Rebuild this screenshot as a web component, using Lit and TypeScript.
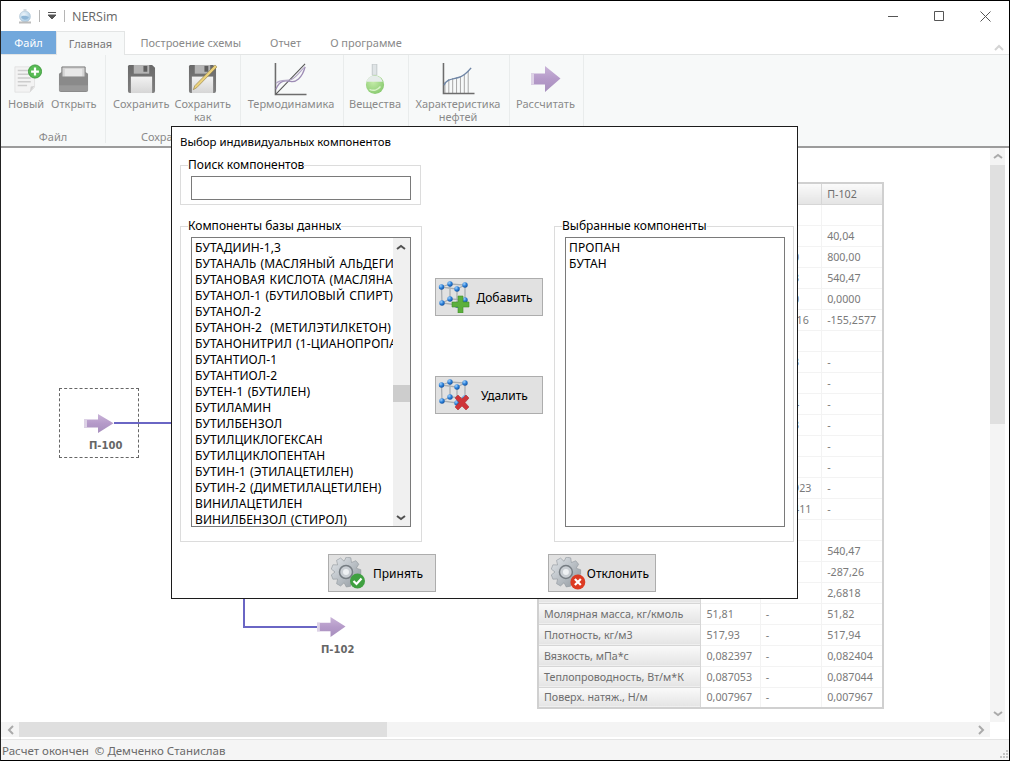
import { LitElement, html, css, svg } from 'lit';
import { customElement } from 'lit/decorators.js';

const gearPath = (cx: number, cy: number, outer: number, inner: number, teeth: number) => {
  const pts: string[] = [];
  const step = (Math.PI * 2) / teeth;
  for (let i = 0; i < teeth; i++) {
    const a = i * step;
    const corners: [number, number][] = [
      [inner, a - step * 0.5],
      [outer, a - step * 0.22],
      [outer, a + step * 0.22],
      [inner, a + step * 0.5],
    ];
    for (const [r, t] of corners) {
      pts.push(`${(cx + r * Math.cos(t)).toFixed(1)},${(cy + r * Math.sin(t)).toFixed(1)}`);
    }
  }
  return pts.join(' ');
};

const defs = html`<svg class="defs" width="0" height="0" aria-hidden="true">
  <defs>
    <linearGradient id="arrow" x1="0" y1="0" x2="0" y2="1">
      <stop offset="0" stop-color="#c9b3d8" />
      <stop offset="0.5" stop-color="#b59ac9" />
      <stop offset="1" stop-color="#a78fbd" />
    </linearGradient>
    <linearGradient id="floppy" x1="0" y1="0" x2="0" y2="1">
      <stop offset="0" stop-color="#6a6a6a" />
      <stop offset="1" stop-color="#7f7f7f" />
    </linearGradient>
    <linearGradient id="label" x1="0" y1="0" x2="0" y2="1">
      <stop offset="0" stop-color="#f2f2f2" />
      <stop offset="1" stop-color="#d6d6d6" />
    </linearGradient>
    <linearGradient id="steel" x1="0" y1="0" x2="1" y2="1">
      <stop offset="0" stop-color="#e4e8ec" />
      <stop offset="1" stop-color="#8f979e" />
    </linearGradient>
    <radialGradient id="ball" cx="0.35" cy="0.3" r="0.8">
      <stop offset="0" stop-color="#9fd2ff" />
      <stop offset="0.5" stop-color="#2a7fd8" />
      <stop offset="1" stop-color="#0f4a96" />
    </radialGradient>
    <radialGradient id="liquid" cx="0.4" cy="0.35" r="0.8">
      <stop offset="0" stop-color="#c4eba8" />
      <stop offset="1" stop-color="#7fc567" />
    </radialGradient>
    <radialGradient id="globe" cx="0.4" cy="0.35" r="0.75">
      <stop offset="0" stop-color="#eef5fa" />
      <stop offset="1" stop-color="#9fc3df" />
    </radialGradient>
  </defs>
</svg>`;

const logoIcon = html`<svg width="16" height="15" viewBox="0 0 16 15">
  <path d="M6.500 0h3v3h-3z" fill="#d5dbe0" />
  <circle cx="8" cy="7.500" r="5.500" fill="url(#globe)" stroke="#b6c6d3" stroke-width="0.600" />
  <path d="M4 8c2-2 5-1 8 0-1 3-6 4-8 0z" fill="#8fb6d6" />
  <rect x="2" y="12.500" width="12" height="2" fill="#bcbcbc" />
</svg>`;

const newIcon = html`<svg class="shift" width="28" height="30" viewBox="0 0 30 32" preserveAspectRatio="none">
  <path d="M1 3h21v22l-5 5H1z" fill="#f3f3f3" stroke="#e2e2e2" />
  <path d="M4 7h12M4 11h14M4 15h14M4 19h14M4 23h10" stroke="#cdcdcd" stroke-width="1.600" />
  <path d="M17 30l1-6 4-0.500z" fill="#d2d2d2" />
  <circle cx="22.500" cy="8" r="7" fill="#58bb55" stroke="#3d9a3c" />
  <path d="M22.500 3.800v8.400M18.300 8h8.400" stroke="#fff" stroke-width="2.400" />
</svg>`;

const openIcon = html`<svg width="31" height="27" viewBox="0 0 32 28" preserveAspectRatio="none">
  <path d="M4 1h24v12H4z" fill="#d4d4d4" stroke="#777" />
  <rect x="7" y="3" width="18" height="8" fill="#e8e8e8" />
  <path d="M1 8l3-2v5h24V6l3 2v17a2 2 0 0 1-2 2H3a2 2 0 0 1-2-2z" fill="#8a8a8a" />
  <rect x="1" y="20" width="30" height="6" fill="#999" />
</svg>`;

const floppyIcon = (pencil = false) => html`<svg width="29" height="30" viewBox="0 0 30 31" preserveAspectRatio="none">
  <path d="M2 1h24l3 3v24a2 2 0 0 1-2 2H3a2 2 0 0 1-2-2V2z" fill="url(#floppy)" />
  <rect x="7" y="1" width="16" height="9" fill="#b4b4b4" />
  <rect x="17" y="2" width="4" height="6" fill="#5e5e5e" />
  <rect x="4" y="13" width="22" height="17" fill="url(#label)" />
  ${pencil
    ? svg`<path d="M28 1l2 2L9 24.500l-3.500 2 1.500-4z" fill="#ecd27c" stroke="#8a7a44" stroke-width="0.600" />`
    : ''}
</svg>`;

const thermoIcon = html`<svg width="33" height="33" viewBox="0 0 34 34">
  <path d="M1.500 0v32.500h32" fill="none" stroke="#6d6d6d" stroke-width="1.600" />
  <path d="M2 32L32 1" stroke="#555" stroke-width="1.100" fill="none" />
  <path d="M2 27c4-10 10-9 15-8s12-3 15-15" stroke="#9d8cb5" stroke-width="1.400" fill="none" />
  <path d="M2 21c5-5 11-2 16-4s10-10 14-13" stroke="#b3a7c6" stroke-width="1.200" fill="none" />
</svg>`;

const flaskIcon = html`<svg width="20" height="31" viewBox="0 0 22 33" preserveAspectRatio="none">
  <path d="M8 0h5v12h-5z" fill="#dfe4e6" stroke="#bfc5c8" />
  <circle cx="11" cy="22" r="10" fill="url(#liquid)" />
  <path d="M1.500 19a10 10 0 0 1 6.500-6.500h5a10 10 0 0 1 6.500 6.500z" fill="#e6ecea" />
  <path d="M5 27c4 2 9 1 12-3" stroke="#d8f2c8" stroke-width="1.500" fill="none" />
</svg>`;

const oilIcon = html`<svg width="33" height="32" viewBox="0 0 34 33">
  <path d="M3 19.500V31M7 16.500V31M11 15.500V31M15 15V31M19 13.500V31M23 11.500V31M27 8V31" stroke="#a4a4a4" stroke-width="1" fill="none" />
  <path d="M1.500 0v31.500h32" fill="none" stroke="#6d6d6d" stroke-width="1.600" />
  <path d="M2 23c3-7 9-6 15-8s9-5 13-10" stroke="#6f86a6" stroke-width="1.500" fill="none" />
</svg>`;

const arrowIcon = (w: number, h: number) => html`<svg width=${w} height=${h} viewBox="0 0 30 26" preserveAspectRatio="none">
  <path d="M0 7.500h14V0l15.500 12.500L14 26v-7.500H0z" fill="url(#arrow)" />
  <path d="M0 7.500h3v11H0z" fill="#ddd2e6" />
</svg>`;

const cubeIcon = (badge: 'add' | 'del') => {
  const balls = [
    [3.5, 6], [12, 3], [27, 4], [19, 8], [4, 22], [12, 18], [19, 24], [27, 19],
  ];
  return html`<svg width="32" height="32" viewBox="0 0 32 32">
    <path d="M3.500 6L19 8V24L4 22zM12 3L27 4V19L12 18zM3.500 6L12 3M19 8L27 4M4 22L12 18M19 24L27 19" fill="none" stroke="#a9aeb2" stroke-width="1.300" />
    ${balls.map(([x, y]) => svg`<circle cx=${x} cy=${y} r="2.700" fill="url(#ball)" />`)}
    ${badge === 'add'
      ? svg`<path d="M20 15h5v6h6v5h-6v6h-5v-6h-6v-5h6z" fill="#5cb03c" stroke="#3f8f2d" stroke-width="0.600" />`
      : svg`<path d="M17 19l3-3 4 4 4-4 3 3-4 4.500 4 4.500-3 3-4-4-4 4-3-3 4-4.500z" fill="#cf3438" stroke="#a92528" stroke-width="0.500" />`}
  </svg>`;
};

const gearIcon = (badge: 'ok' | 'no') => html`<svg width="36" height="33" viewBox="0 0 36 33">
  <polygon points=${gearPath(15, 15, 15, 11, 9)} fill="url(#steel)" stroke="#8e959b" stroke-width="0.600" />
  <circle cx="15" cy="15" r="6.500" fill="#c9ced3" stroke="#767d83" stroke-width="1.500" />
  <circle cx="15" cy="15" r="3" fill="#eef1f3" />
  ${badge === 'ok'
    ? svg`<circle cx="26.500" cy="24" r="7.500" fill="#3fa040" />
        <path d="M22.500 24l3 3 5-5.500" fill="none" stroke="#fff" stroke-width="2.200" />`
    : svg`<circle cx="27" cy="25" r="7.500" fill="#dc3a22" />
        <path d="M24 22l6 6M30 22l-6 6" fill="none" stroke="#fff" stroke-width="2.200" />`}
</svg>`;

const chevron = (d: string, cls = '') => html`<svg class=${cls} width="10" height="7" viewBox="0 0 10 7">
  <path d=${d} fill="none" stroke="currentColor" stroke-width="2" />
</svg>`;

const dbComponents = [
  'БУТАДИИН-1,3',
  'БУТАНАЛЬ (МАСЛЯНЫЙ АЛЬДЕГИД)',
  'БУТАНОВАЯ КИСЛОТА (МАСЛЯНАЯ)',
  'БУТАНОЛ-1 (БУТИЛОВЫЙ СПИРТ)',
  'БУТАНОЛ-2',
  'БУТАНОН-2  (МЕТИЛЭТИЛКЕТОН)',
  'БУТАНОНИТРИЛ (1-ЦИАНОПРОПАН)',
  'БУТАНТИОЛ-1',
  'БУТАНТИОЛ-2',
  'БУТЕН-1 (БУТИЛЕН)',
  'БУТИЛАМИН',
  'БУТИЛБЕНЗОЛ',
  'БУТИЛЦИКЛОГЕКСАН',
  'БУТИЛЦИКЛОПЕНТАН',
  'БУТИН-1 (ЭТИЛАЦЕТИЛЕН)',
  'БУТИН-2 (ДИМЕТИЛАЦЕТИЛЕН)',
  'ВИНИЛАЦЕТИЛЕН',
  'ВИНИЛБЕНЗОЛ (СТИРОЛ)',
];

// label, П-100, middle stream, П-102; cells under the dialog stay empty
const tableRows: string[][] = [
  ['', '', '', ''],
  ['', '', '', '40,04'],
  ['', '', '800,00', '800,00'],
  ['', '', '540,43', '540,47'],
  ['', '', '0,0000', '0,0000'],
  ['', '', '-25,2616', '-155,2577'],
  ['', '', '', ''],
  ['', '', '0,4673', '-'],
  ['', '', '', '-'],
  ['', '', '0,2484', '-'],
  ['', '', '0,3213', '-'],
  ['', '', '', '-'],
  ['', '', '', '-'],
  ['', '', '0,009923', '-'],
  ['', '', '0,009411', '-'],
  ['', '', '', ''],
  ['', '', '', '540,47'],
  ['', '', '', '-287,26'],
  ['', '', '', '2,6818'],
  ['Молярная масса, кг/кмоль', '51,81', '-', '51,82'],
  ['Плотность, кг/м3', '517,93', '-', '517,94'],
  ['Вязкость, мПа*с', '0,082397', '-', '0,082404'],
  ['Теплопроводность, Вт/м*К', '0,087053', '-', '0,087044'],
  ['Поверх. натяж., Н/м', '0,007967', '-', '0,007967'],
];

@customElement('app-root')
export class AppRoot extends LitElement {
  static styles = css`
    :host {
      display: block;
      width: 1010px;
      height: 761px;
      font-family: 'Noto Sans', sans-serif;
    }
    .defs {
      position: absolute;
    }
    .window {
      position: relative;
      box-sizing: border-box;
      width: 1010px;
      height: 761px;
      border: 1px solid #000;
      border-left-color: #222;
      background: #fff;
      display: flex;
      flex-direction: column;
      overflow: hidden;
    }
    .titlebar {
      height: 30px;
      display: flex;
      align-items: center;
      font-size: 12px;
      color: #666;
      flex: none;
    }
    .logo {
      margin-left: 16px;
      display: flex;
    }
    .tsep {
      width: 1px;
      height: 12px;
      background: #b5b5b5;
    }
    .tsep.first {
      margin-left: 6px;
    }
    .qat {
      width: 24px;
      display: flex;
      justify-content: center;
    }
    .appname {
      margin-left: 7px;
      font-family: 'Open Sans', sans-serif;
      font-size: 12.5px;
      flex: 1;
    }
    .winbtn {
      width: 46px;
      height: 30px;
      display: flex;
      align-items: center;
      justify-content: center;
    }
    .winbtns {
      display: flex;
      margin-right: 1px;
    }
    .tabs {
      height: 24px;
      display: flex;
      flex: none;
      position: relative;
      font-size: 11px;
      color: #8a8a8a;
      border-bottom: 1px solid #e3e5e5;
      box-sizing: border-box;
    }
    .tab {
      display: flex;
      align-items: center;
      justify-content: center;
      height: 23px;
    }
    .tab.file {
      width: 55px;
      background: #72a8dc;
      color: #fff;
    }
    .tab.active {
      width: 69px;
      height: 24px;
      box-sizing: border-box;
      background: #f7f9f9;
      border: 1px solid #e3e5e5;
      border-bottom: none;
      color: #777;
    }
    .tab.plain {
      padding: 0 14.500px;
    }
    .tabs .active + .plain {
      margin-left: 1px;
    }
    .collapse {
      position: absolute;
      right: 5px;
      top: 8px;
      color: #d4d4d4;
    }
    .ribbon {
      height: 93px;
      flex: none;
      display: flex;
      box-sizing: border-box;
      background: #f7f9f9;
      border-bottom: 2px solid #9c9c9c;
      font-size: 11px;
      color: #8a8a8a;
      text-align: center;
    }
    .group {
      box-sizing: border-box;
      display: flex;
      flex-direction: column;
      padding-top: 6px;
      margin-bottom: 3px;
      border-right: 1px solid #e9ecec;
    }
    .g1 {
      width: 105px;
    }
    .g2 {
      width: 135px;
    }
    .g3 {
      width: 103px;
    }
    .g4 {
      width: 65px;
    }
    .g5 {
      width: 101px;
    }
    .g6 {
      width: 74px;
    }
    .group-items {
      display: flex;
      justify-content: space-around;
      flex: 1;
      padding: 0 5px 0 3px;
    }
    .g1 .group-items {
      justify-content: flex-start;
      padding: 0 0 0 7px;
      gap: 7px;
    }
    .g2 .group-items {
      justify-content: flex-start;
      padding: 0 0 0 7px;
      gap: 5px;
    }
    .group-name {
      height: 12px;
      line-height: 12px;
    }
    .rb {
      display: flex;
      flex-direction: column;
      align-items: center;
      line-height: 13px;
    }
    .rb-icon {
      height: 36px;
      display: flex;
      align-items: center;
      justify-content: center;
    }
    .rb-icon .shift {
      margin-left: 4px;
    }
    .rb-text {
      white-space: nowrap;
    }
    .main {
      flex: 1;
      display: flex;
      min-height: 0;
    }
    .canvas {
      flex: 1;
      position: relative;
      overflow: hidden;
      background: #fff;
    }
    .vscroll {
      width: 15px;
      margin-right: 4px;
      background: #f4f4f4;
      display: flex;
      flex-direction: column;
      align-items: center;
      color: #aaa;
    }
    .vscroll .arrow {
      height: 17px;
      display: flex;
      align-items: center;
    }
    .vthumb {
      width: 100%;
      height: 259px;
      background: #e0e0e0;
    }
    .vspace {
      flex: 1;
    }
    .hscroll {
      height: 15px;
      flex: none;
      display: flex;
      align-items: center;
      background: #f4f4f4;
      margin-right: 19px;
      color: #aaa;
    }
    .hscroll .arrow {
      width: 18px;
      display: flex;
      justify-content: center;
    }
    .hthumb {
      width: 368px;
      height: 15px;
      background: #dfdfdf;
    }
    .hspace {
      flex: 1;
    }
    .statusbar {
      flex: none;
      height: 21px;
      margin-top: 2px;
      padding: 1px 0 0 1px;
      box-sizing: border-box;
      background: #f5f5f5;
      border-top: 1px solid #e4e4e4;
      display: flex;
      align-items: center;
      font-size: 11.500px;
      color: #6a6a6a;
      position: relative;
    }
    .statusbar span + span {
      margin-left: 6px;
    }
    .grip {
      position: absolute;
      right: 1px;
      bottom: 2px;
    }

    /* diagram */
    .node {
      position: absolute;
      display: flex;
    }
    .link {
      position: absolute;
      background: #6a66c4;
    }
    .box-100 {
      position: absolute;
      left: 58px;
      top: 240px;
      width: 80px;
      height: 70px;
      box-sizing: border-box;
      border: 1px dashed #666;
    }
    .node-100 {
      left: 83px;
      top: 266px;
    }
    .node-102 {
      left: 316px;
      top: 469px;
    }
    .link-100 {
      left: 113px;
      top: 274px;
      width: 60px;
      height: 2px;
    }
    .link-down {
      left: 242px;
      top: 450px;
      width: 2px;
      height: 30px;
    }
    .link-102 {
      left: 242px;
      top: 478px;
      width: 75px;
      height: 2px;
    }
    .node-label {
      position: absolute;
      font-family: 'DejaVu Sans', sans-serif;
      font-size: 10px;
      font-weight: bold;
      color: #666;
    }
    .label-100 {
      left: 88px;
      top: 292px;
    }
    .label-102 {
      left: 320px;
      top: 496px;
    }
    .props {
      position: absolute;
      left: 536px;
      top: 34px;
      width: 347px;
      border-collapse: collapse;
      table-layout: fixed;
      border: 2px solid #d0d0d0;
      font-size: 10.700px;
      color: #7a7a7a;
    }
    .props .c1 {
      width: 162px;
    }
    .props .c2 {
      width: 59px;
    }
    .props .c3 {
      width: 61px;
    }
    .props .c4 {
      width: 61px;
    }
    .props td,
    .props th {
      height: 21px;
      box-sizing: border-box;
      padding: 0 0 0 5px;
      border: 1px solid #f3f3f3;
      font-weight: normal;
      text-align: left;
      white-space: nowrap;
      overflow: hidden;
    }
    .props th {
      background: linear-gradient(#fafafa, #e4e4e4);
      border: none;
      border-bottom: 1px solid #d6d6d6;
      border-right: 1px solid #d6d6d6;
      color: #6e6e6e;
    }

    /* dialog */
    .dialog {
      position: absolute;
      left: 170px;
      top: 125px;
      width: 627px;
      height: 473px;
      box-sizing: border-box;
      background: #fff;
      border: 1px solid #1c1c1c;
      padding: 7px 2px 0 8px;
      display: flex;
      flex-direction: column;
      font-size: 12px;
      color: #000;
    }
    .dialog-title {
      line-height: 16px;
      height: 16px;
      font-size: 11.400px;
    }
    fieldset {
      margin: 0;
      padding: 0;
      box-sizing: border-box;
      border: 1px solid #dcdcdc;
      min-width: 0;
      position: relative;
    }
    legend {
      margin-left: -3px;
      padding: 0;
      line-height: 16px;
    }
    .search {
      width: 241px;
      height: 48px;
      margin-top: 7px;
      display: flex;
      padding: 3px 0 0 10px;
    }
    .search input {
      width: 220px;
      height: 24px;
      box-sizing: border-box;
      border: 1px solid #7a7a7a;
      border-radius: 0;
      outline: none;
      padding: 0;
    }
    .columns {
      display: flex;
      margin-top: 13px;
    }
    .col {
      width: 242px;
      height: 324px;
      padding: 3px 0 0 10px;
    }
    .col.right {
      width: 240px;
    }
    .listbox {
      width: 220px;
      height: 290px;
      box-sizing: border-box;
      border: 1px solid #7a7a7a;
      display: flex;
      overflow: hidden;
      line-height: 16px;
      white-space: pre;
      letter-spacing: 0.100px;
      word-spacing: 1px;
    }
    .items {
      flex: 1;
      min-width: 0;
      overflow: hidden;
      padding: 2px 0 0 3px;
    }
    .lb-scroll {
      width: 17px;
      flex: none;
      background: #f0f0f0;
      position: relative;
      color: #505050;
    }
    .lb-scroll svg {
      position: absolute;
      left: 3px;
    }
    .lb-up {
      top: 6px;
    }
    .lb-down {
      bottom: 5px;
    }
    .lb-thumb {
      position: absolute;
      left: 0;
      width: 100%;
      top: 147px;
      height: 17px;
      background: #cdcdcd;
    }
    .middle {
      width: 132px;
      padding: 60px 0 0 13px;
      box-sizing: border-box;
      display: flex;
      flex-direction: column;
      gap: 60px;
    }
    .btn {
      width: 108px;
      height: 38px;
      box-sizing: border-box;
      background: #e1e1e1;
      border: 1px solid #adadad;
      display: flex;
      align-items: center;
      padding: 0 3px 0 2px;
    }
    .btn span {
      flex: 1;
      text-align: center;
    }
    .btn.gear span {
      padding-right: 3px;
    }
    .actions {
      display: flex;
      margin-top: 12px;
      padding-left: 148px;
      gap: 112px;
    }
  `;

  private ribbonBtn(icon: unknown, lines: string[]) {
    return html`<div class="rb">
      <div class="rb-icon">${icon}</div>
      ${lines.map((l) => html`<div class="rb-text">${l}</div>`)}
    </div>`;
  }

  render() {
    return html`
      ${defs}
      <div class="window">
        <div class="titlebar">
          <div class="logo">${logoIcon}</div>
          <div class="tsep first"></div>
          <div class="qat">
            <svg width="8" height="8" viewBox="0 0 8 8"><path d="M0 0.500h8M0 3h8L4 7z" stroke="#555" fill="#555" stroke-width="1" /></svg>
          </div>
          <div class="tsep"></div>
          <div class="appname">NERSim</div>
          <div class="winbtns">
            <div class="winbtn"><svg width="10" height="10" viewBox="0 0 10 10"><path d="M0 5.500h10" stroke="#555" /></svg></div>
            <div class="winbtn"><svg width="10" height="10" viewBox="0 0 10 10"><path d="M.5.500h9v9h-9z" fill="none" stroke="#555" /></svg></div>
            <div class="winbtn"><svg width="11" height="11" viewBox="0 0 11 11"><path d="M.5.500l10 10M10.500.500l-10 10" stroke="#555" /></svg></div>
          </div>
        </div>

        <div class="tabs">
          <div class="tab file">Файл</div>
          <div class="tab active">Главная</div>
          <div class="tab plain">Построение схемы</div>
          <div class="tab plain">Отчет</div>
          <div class="tab plain">О программе</div>
          <div class="collapse">${chevron('M1 6l4-4 4 4')}</div>
        </div>

        <div class="ribbon">
          <div class="group g1">
            <div class="group-items">
              ${this.ribbonBtn(newIcon, ['Новый'])} ${this.ribbonBtn(openIcon, ['Открыть'])}
            </div>
            <div class="group-name">Файл</div>
          </div>
          <div class="group g2">
            <div class="group-items">
              ${this.ribbonBtn(floppyIcon(), ['Сохранить'])} ${this.ribbonBtn(floppyIcon(true), ['Сохранить', 'как'])}
            </div>
            <div class="group-name">Сохранение</div>
          </div>
          <div class="group g3">
            <div class="group-items">${this.ribbonBtn(thermoIcon, ['Термодинамика'])}</div>
          </div>
          <div class="group g4">
            <div class="group-items">${this.ribbonBtn(flaskIcon, ['Вещества'])}</div>
          </div>
          <div class="group g5">
            <div class="group-items">${this.ribbonBtn(oilIcon, ['Характеристика', 'нефтей'])}</div>
          </div>
          <div class="group g6">
            <div class="group-items">${this.ribbonBtn(arrowIcon(30, 26), ['Рассчитать'])}</div>
          </div>
        </div>

        <div class="main">
          <div class="canvas">
            <div class="box-100"></div>
            <div class="node node-100">${arrowIcon(30, 19)}</div>
            <div class="link link-100"></div>
            <div class="node-label label-100">П-100</div>

            <div class="link link-down"></div>
            <div class="link link-102"></div>
            <div class="node node-102">${arrowIcon(29, 20)}</div>
            <div class="node-label label-102">П-102</div>

            <table class="props">
              <colgroup>
                <col class="c1" /><col class="c2" /><col class="c3" /><col class="c4" />
              </colgroup>
              <thead>
                <tr><th></th><th></th><th></th><th>П-102</th></tr>
              </thead>
              <tbody>
                ${tableRows.map(
                  (r) => html`<tr><th>${r[0]}</th><td>${r[1]}</td><td>${r[2]}</td><td>${r[3]}</td></tr>`
                )}
              </tbody>
            </table>
          </div>
          <div class="vscroll">
            <div class="arrow">${chevron('M1 5l4-3 4 3')}</div>
            <div class="vthumb"></div>
            <div class="vspace"></div>
            <div class="arrow">${chevron('M1 2l4 3 4-3')}</div>
          </div>
        </div>
        <div class="hscroll">
          <div class="arrow"><svg width="7" height="10" viewBox="0 0 7 10"><path d="M6 1L2 5l4 4" fill="none" stroke="currentColor" stroke-width="2" /></svg></div>
          <div class="hthumb"></div>
          <div class="hspace"></div>
          <div class="arrow"><svg width="7" height="10" viewBox="0 0 7 10"><path d="M1 1l4 4-4 4" fill="none" stroke="currentColor" stroke-width="2" /></svg></div>
        </div>
        <div class="statusbar">
          <span>Расчет окончен</span><span>© Демченко Станислав</span>
          <svg class="grip" width="8" height="8" viewBox="0 0 8 8" fill="#c4c4c4">
            <rect x="6" y="0" width="2" height="2" /><rect x="3" y="3" width="2" height="2" /><rect x="6" y="3" width="2" height="2" />
            <rect x="0" y="6" width="2" height="2" /><rect x="3" y="6" width="2" height="2" /><rect x="6" y="6" width="2" height="2" />
          </svg>
        </div>

        <div class="dialog">
          <div class="dialog-title">Выбор индивидуальных компонентов</div>
          <fieldset class="search">
            <legend>Поиск компонентов</legend>
            <input type="text" />
          </fieldset>
          <div class="columns">
            <fieldset class="col">
              <legend>Компоненты базы данных</legend>
              <div class="listbox">
                <div class="items">${dbComponents.map((c) => html`<div>${c}</div>`)}</div>
                <div class="lb-scroll">
                  ${chevron('M1 5l4-3 4 3', 'lb-up')}
                  <div class="lb-thumb"></div>
                  ${chevron('M1 2l4 3 4-3', 'lb-down')}
                </div>
              </div>
            </fieldset>
            <div class="middle">
              <div class="btn">${cubeIcon('add')}<span>Добавить</span></div>
              <div class="btn">${cubeIcon('del')}<span>Удалить</span></div>
            </div>
            <fieldset class="col right">
              <legend>Выбранные компоненты</legend>
              <div class="listbox">
                <div class="items"><div>ПРОПАН</div><div>БУТАН</div></div>
              </div>
            </fieldset>
          </div>
          <div class="actions">
            <div class="btn gear">${gearIcon('ok')}<span>Принять</span></div>
            <div class="btn gear">${gearIcon('no')}<span>Отклонить</span></div>
          </div>
        </div>
      </div>
    `;
  }
}
